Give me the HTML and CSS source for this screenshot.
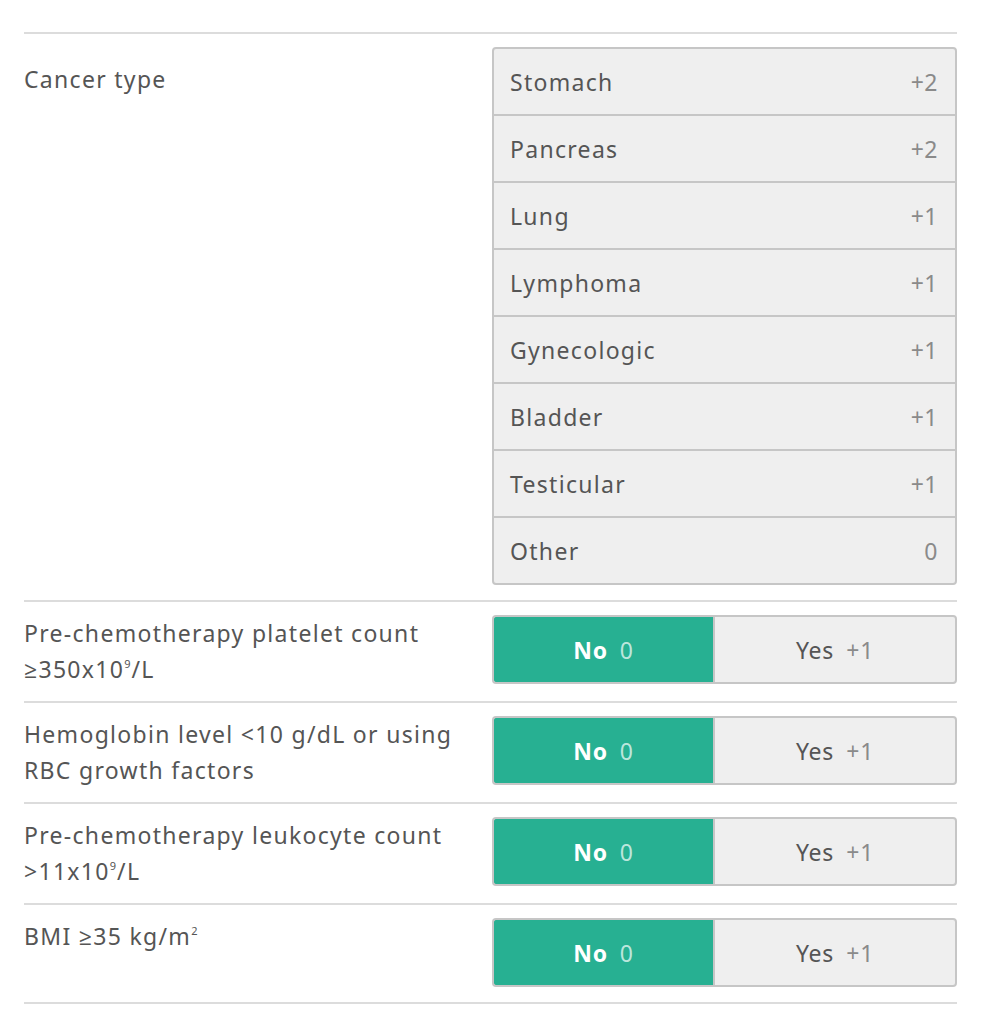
FILE: index.html
```html
<!DOCTYPE html>
<html lang="en">
<head>
<meta charset="utf-8">
<title>Calculator</title>
<link rel="stylesheet" href="styles.css">
</head>
<body>
<div class="calc">
  <div class="row row-cancer">
    <div class="label label-cancer">Cancer type</div>
    <div class="options">
      <div class="option"><span class="opt-name">Stomach</span><span class="opt-pts">+2</span></div>
      <div class="option"><span class="opt-name">Pancreas</span><span class="opt-pts">+2</span></div>
      <div class="option"><span class="opt-name">Lung</span><span class="opt-pts">+1</span></div>
      <div class="option"><span class="opt-name">Lymphoma</span><span class="opt-pts">+1</span></div>
      <div class="option"><span class="opt-name">Gynecologic</span><span class="opt-pts">+1</span></div>
      <div class="option"><span class="opt-name">Bladder</span><span class="opt-pts">+1</span></div>
      <div class="option"><span class="opt-name">Testicular</span><span class="opt-pts">+1</span></div>
      <div class="option"><span class="opt-name">Other</span><span class="opt-pts">0</span></div>
    </div>
  </div>
  <div class="row">
    <div class="label">Pre-chemotherapy platelet count ≥350x10<sup>9</sup>/L</div>
    <div class="toggle">
      <div class="btn btn-no active"><span class="btn-name">No</span><span class="btn-pts">0</span></div>
      <div class="btn btn-yes"><span class="btn-name">Yes</span><span class="btn-pts">+1</span></div>
    </div>
  </div>
  <div class="row">
    <div class="label">Hemoglobin level &lt;10 g/dL or using RBC growth factors</div>
    <div class="toggle">
      <div class="btn btn-no active"><span class="btn-name">No</span><span class="btn-pts">0</span></div>
      <div class="btn btn-yes"><span class="btn-name">Yes</span><span class="btn-pts">+1</span></div>
    </div>
  </div>
  <div class="row">
    <div class="label">Pre-chemotherapy leukocyte count &gt;11x10<sup>9</sup>/L</div>
    <div class="toggle">
      <div class="btn btn-no active"><span class="btn-name">No</span><span class="btn-pts">0</span></div>
      <div class="btn btn-yes"><span class="btn-name">Yes</span><span class="btn-pts">+1</span></div>
    </div>
  </div>
  <div class="row row-last">
    <div class="label">BMI ≥35 kg/m<sup>2</sup></div>
    <div class="toggle">
      <div class="btn btn-no active"><span class="btn-name">No</span><span class="btn-pts">0</span></div>
      <div class="btn btn-yes"><span class="btn-name">Yes</span><span class="btn-pts">+1</span></div>
    </div>
  </div>
</div>
</body>
</html>
```
FILE: styles.css
```css
html, body {
  margin: 0;
  padding: 0;
  background: #ffffff;
}
body {
  font-family: "Noto Sans", "Open Sans", sans-serif;
  color: #555555;
}
.calc {
  padding: 32px 25px 0 24px;
}
.row {
  display: grid;
  grid-template-columns: 1fr 465px;
  align-items: start;
  border-top: 2px solid #dcdcdc;
  padding: 13px 0 14px;
}
.row-cancer {
  padding-bottom: 15px;
}
.row-last {
  border-bottom: 2px solid #dcdcdc;
  padding-bottom: 15px;
}
.label {
  font-size: 23px;
  letter-spacing: 1.3px;
  line-height: 36px;
  padding-right: 20px;
}
.label sup {
  font-size: 11px;
  line-height: 0;
  vertical-align: 10px;
  letter-spacing: 0;
  margin-right: 1px;
}
.label-cancer {
  padding-top: 14px;
}
.options {
  display: flex;
  flex-direction: column;
}
.option {
  display: flex;
  justify-content: space-between;
  align-items: center;
  height: 69px;
  box-sizing: border-box;
  padding: 0 17px 0 16px;
  background: #efefef;
  border: 2px solid #c6c6c6;
  margin-top: -2px;
  font-size: 23px;
  letter-spacing: 1.3px;
}
.option:first-child {
  margin-top: 0;
  border-radius: 4px 4px 0 0;
}
.option:last-child {
  border-radius: 0 0 4px 4px;
}
.opt-name {
  color: #555555;
}
.opt-pts {
  color: #8a8a8a;
  letter-spacing: 0.5px;
}
.toggle {
  display: flex;
  height: 69px;
}
.btn {
  display: flex;
  align-items: center;
  justify-content: center;
  gap: 12px;
  box-sizing: border-box;
  border: 2px solid #c6c6c6;
  background: #efefef;
  font-size: 23px;
  letter-spacing: 0.8px;
}
.btn-no {
  flex: 0 0 221px;
  border-radius: 4px 0 0 4px;
  border-right: 0;
}
.btn-yes {
  flex: 1 1 auto;
  border-radius: 0 4px 4px 0;
}
.btn-name {
  color: #555555;
}
.btn-pts {
  color: #8a8a8a;
}
.btn.active {
  background: #27b092;
}
.btn.active .btn-name {
  color: #ffffff;
  font-weight: 700;
}
.btn.active .btn-pts {
  color: rgba(255, 255, 255, 0.7);
}
```
